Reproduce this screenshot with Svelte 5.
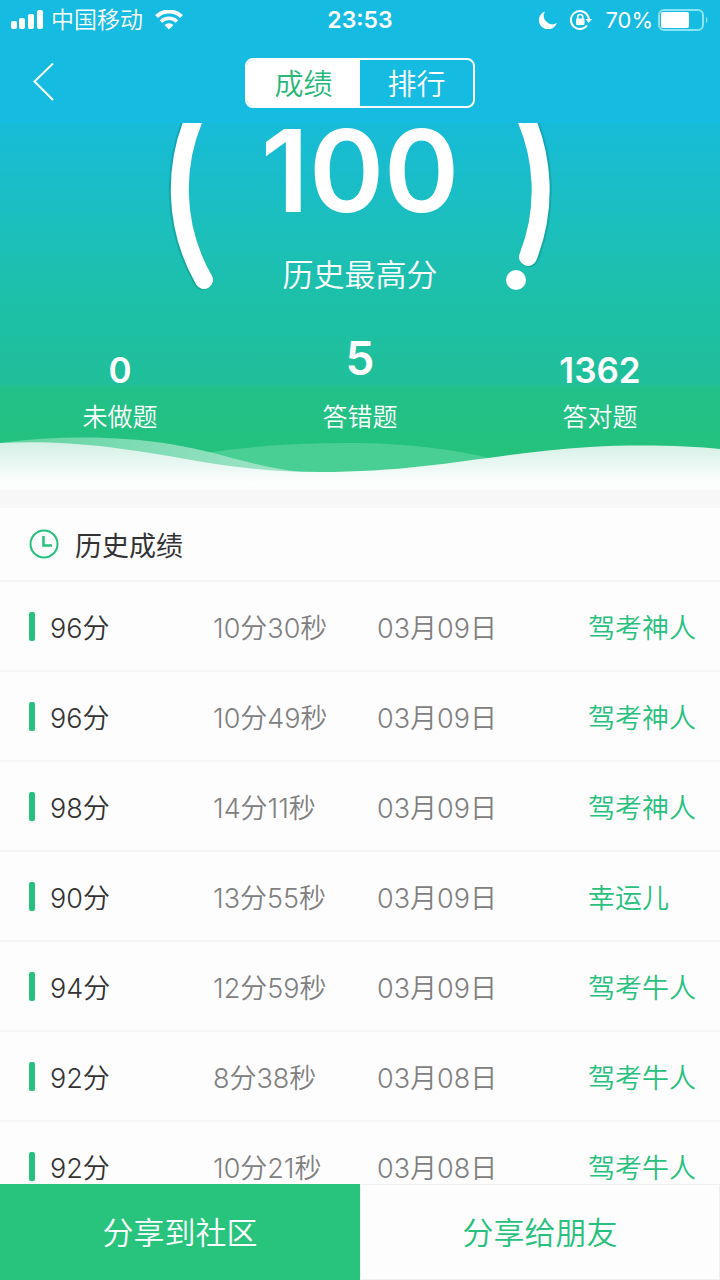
<script>
  // Currently selected tab
  let tab = $state('score');

  // Totals shown under the gauge
  const stats = [
    { value: 0, label: '未做题' },
    { value: 5, label: '答错题', big: true },
    { value: 1362, label: '答对题' },
  ];

  const records = [
    { score: 96, time: '10分30秒', date: '03月09日', title: '驾考神人' },
    { score: 96, time: '10分49秒', date: '03月09日', title: '驾考神人' },
    { score: 98, time: '14分11秒', date: '03月09日', title: '驾考神人' },
    { score: 90, time: '13分55秒', date: '03月09日', title: '幸运儿' },
    { score: 94, time: '12分59秒', date: '03月09日', title: '驾考牛人' },
    { score: 92, time: '8分38秒', date: '03月08日', title: '驾考牛人' },
    { score: 92, time: '10分21秒', date: '03月08日', title: '驾考牛人' },
  ];
</script>

<div class="screen">
  <!-- Status bar -->
  <div class="status">
    <div class="status-left">
      <svg width="32" height="20" viewBox="0 0 32 20" fill="#fff">
        <rect x="0" y="11" width="6" height="8" rx="2" />
        <rect x="8" y="8" width="6" height="11" rx="2" />
        <rect x="17" y="4" width="6" height="15" rx="2" />
        <rect x="26" y="0" width="6" height="19" rx="2" />
      </svg>
      <span class="carrier">中国移动</span>
      <svg class="wifi" width="28" height="20" viewBox="0 0 28 20">
        <path d="M1.5 6.500A18 18 0 0 1 26.500 6.500" fill="none" stroke="#fff" stroke-width="4" />
        <path d="M6 11.500A11.500 11.500 0 0 1 22 11.500" fill="none" stroke="#fff" stroke-width="3.600" />
        <path d="M9.500 15A6.500 6.500 0 0 1 18.500 15L14 19.500Z" fill="#fff" />
      </svg>
    </div>
    <span class="clock">23:53</span>
    <div class="status-right">
      <svg width="18" height="18" viewBox="0 0 18 18">
        <path d="M6 0.500A9.200 9.200 0 1 0 17.800 12A8.500 8.500 0 0 1 6 0.500Z" fill="#fff" />
      </svg>
      <svg class="lock" width="22" height="20" viewBox="0 0 22 20">
        <path d="M17 4.500A9 9 0 1 0 17 15.500M16 3.500A9 9 0 0 1 19 10" fill="none" stroke="#fff" stroke-width="2" />
        <path d="M15.500 9H22L18.700 13Z" fill="#fff" />
        <rect x="6" y="8.500" width="8.500" height="6.500" rx="1" fill="#fff" />
        <path d="M7.700 9V7a2.500 2.500 0 0 1 5 0V9" fill="none" stroke="#fff" stroke-width="1.600" />
      </svg>
      <span class="percent">70%</span>
      <svg width="51" height="22" viewBox="0 0 51 22">
        <rect x="1" y="1" width="44" height="20" rx="5" fill="none" stroke="#8be3f5" stroke-width="2" />
        <rect x="3" y="3" width="28" height="16" rx="2" fill="#fff" />
        <path d="M48 7.500Q51 11 48 14.500Z" fill="#8be3f5" />
      </svg>
    </div>
  </div>

  <!-- Navigation bar -->
  <header class="nav">
    <button class="back" aria-label="返回">
      <svg width="22" height="40" viewBox="0 0 22 40">
        <path d="M21 0.500L2.500 18.500L21 37" fill="none" stroke="#fff" stroke-width="2" />
      </svg>
    </button>
    <div class="tabs">
      <button class:active={tab === 'score'} onclick={() => (tab = 'score')}>成绩</button>
      <button class:active={tab === 'rank'} onclick={() => (tab = 'rank')}>排行</button>
    </div>
  </header>

  <!-- Best score and totals -->
  <section class="hero">
    <div class="gauge">
      <svg width="400" height="177" viewBox="160 123 400 177" fill="none" stroke-linecap="round">
        <g stroke="#08756f" stroke-opacity="0.3" stroke-width="20">
          <path d="M203 280A182 182 0 0 1 198 108" />
          <path d="M522 108A182 182 0 0 1 529 257" />
        </g>
        <g stroke="#fff" stroke-width="18">
          <path d="M204 280A182 182 0 0 1 199 108" />
          <path d="M521 108A182 182 0 0 1 528 257" />
        </g>
        <circle cx="516" cy="280" r="10" fill="#fff" />
      </svg>
      <div class="best">
        <strong>100</strong>
        <span>历史最高分</span>
      </div>
    </div>

    <div class="stats">
      {#each stats as stat}
        <div class="stat">
          <strong class:big={stat.big}>{stat.value}</strong>
          <span>{stat.label}</span>
        </div>
      {/each}
    </div>

    <svg class="waves" viewBox="0 0 720 56" preserveAspectRatio="none">
      <defs>
        <linearGradient id="mist" x1="0" y1="0" x2="0" y2="1">
          <stop offset="0" stop-color="#d3f0e5" />
          <stop offset="0.85" stop-color="#fdfefe" />
          <stop offset="1" stop-color="#fdfdfd" />
        </linearGradient>
        <linearGradient id="crest" x1="0" y1="0" x2="1" y2="0">
          <stop offset="0" stop-color="#5fd3a1" />
          <stop offset="1" stop-color="#a3e5c9" />
        </linearGradient>
      </defs>
      <path d="M170 25C230 13 300 8 360 9C410 10 450 15 490 24L490 40L320 40Z" fill="#49cf93" />
      <path d="M0 9C60 1 120 2 170 10C220 18 250 32 300 38L180 40L0 20Z" fill="url(#crest)" />
      <path d="M0 9C70 6 120 14 180 24C230 33 270 38 320 38C430 38 500 18 590 13C640 10 690 12 720 15V56H0Z" fill="url(#mist)" />
    </svg>
  </section>

  <!-- Score history -->
  <main class="history">
    <h2>
      <svg width="30" height="30" viewBox="0 0 30 30" fill="none" stroke="#27c07d">
        <circle cx="15" cy="15" r="13.500" stroke-width="2" />
        <path d="M14.500 7V16.500H23" stroke-width="2.500" />
      </svg>
      历史成绩
    </h2>
    <table>
      <tbody>
        {#each records as record}
          <tr>
            <td class="score"><span>{record.score}分</span></td>
            <td class="time">{record.time}</td>
            <td class="date">{record.date}</td>
            <td class="title">{record.title}</td>
          </tr>
        {/each}
      </tbody>
    </table>
  </main>

  <footer>
    <button class="primary">分享到社区</button>
    <button>分享给朋友</button>
  </footer>
</div>

<style>
  :global(body) {
    background: #fdfdfd;
  }
  .screen {
    display: flex;
    flex-direction: column;
    height: 100vh;
    font-family: Inter, "Noto Sans CJK SC", sans-serif;
    font-weight: 350;
    background: #fdfdfd;
    color: #333;
  }
  button {
    padding: 0;
    border: none;
    background: none;
    font: inherit;
    color: inherit;
    cursor: pointer;
  }
  svg {
    display: block;
    flex-shrink: 0;
  }

  /* Status bar */
  .status {
    display: grid;
    grid-template-columns: 1fr auto 1fr;
    align-items: center;
    flex-shrink: 0;
    height: 40px;
    padding: 0 11px;
    background: #15bbe0;
    color: #fff;
  }
  .status-left,
  .status-right {
    display: flex;
    align-items: center;
    gap: 8px;
  }
  .status-right {
    gap: 5px;
    justify-content: flex-end;
  }
  .carrier {
    font-size: 23px;
    line-height: 40px;
  }
  .wifi {
    margin-left: 4px;
  }
  .clock {
    font-size: 23px;
    font-weight: 600;
  }
  .percent {
    font-size: 22px;
    font-weight: 400;
  }
  .lock {
    margin: 0 8px;
  }

  /* Navigation bar */
  .nav {
    display: grid;
    grid-template-columns: 1fr auto 1fr;
    align-items: center;
    flex-shrink: 0;
    height: 83px;
    box-sizing: border-box;
    padding: 2px 32px 0;
    background: #15bbe0;
    color: #fff;
  }
  .back {
    justify-self: start;
  }
  .tabs {
    display: flex;
    width: 230px;
    height: 50px;
    box-sizing: border-box;
    border: 2px solid #fff;
    border-radius: 8px;
    overflow: hidden;
  }
  .tabs button {
    flex: 1;
    padding-top: 4px;
    font-size: 29px;
    line-height: 42px;
  }
  .tabs .active {
    background: #fff;
    color: #27b87a;
  }

  /* Best score and totals */
  .hero {
    flex-shrink: 0;
    background: linear-gradient(#17bbd8, #1bbfbc 28%, #1dc0a8 48%, #20bf9a 71%, #22c08a 72%, #24c27c 90%);
    color: #fff;
  }
  .gauge {
    display: grid;
    justify-items: center;
  }
  .gauge > * {
    grid-area: 1 / 1;
  }
  .best {
    display: flex;
    flex-direction: column;
    align-items: center;
    gap: 36px;
  }
  .best strong {
    font-size: 114px;
    line-height: 96px;
    font-weight: 600;
  }
  .best span {
    font-size: 31px;
    line-height: 40px;
  }
  .stats {
    display: flex;
    padding-top: 26px;
  }
  .stat {
    display: flex;
    flex: 1;
    flex-direction: column;
    justify-content: flex-end;
    align-items: center;
    gap: 10px;
  }
  .stat strong {
    font-size: 35px;
    line-height: 40px;
    font-weight: 600;
  }
  .stat .big {
    font-size: 46px;
    line-height: 64px;
  }
  .stat span {
    font-size: 25px;
    line-height: 34px;
  }
  .waves {
    width: 100%;
    height: 56px;
  }

  /* Score history */
  .history {
    flex: 1;
    min-height: 0;
    overflow-y: auto;
    scrollbar-width: none;
    border-top: 18px solid #f7f7f7;
  }
  h2 {
    display: flex;
    align-items: center;
    gap: 16px;
    height: 72px;
    margin: 0;
    padding: 0 29px;
    font-size: 27px;
    font-weight: 400;
  }
  table {
    width: 100%;
    table-layout: fixed;
    border-spacing: 0;
  }
  td {
    height: 90px;
    box-sizing: border-box;
    padding: 0;
    border-top: 2px solid #f5f5f5;
    font-size: 27px;
    white-space: nowrap;
  }
  .score {
    width: 213px;
    box-sizing: border-box;
    padding-left: 29px;
  }
  .score span {
    display: flex;
    align-items: center;
    gap: 15px;
  }
  .score span::before {
    content: "";
    width: 6px;
    height: 29px;
    border-radius: 2px;
    background: #27c07d;
  }
  .time {
    width: 164px;
    color: #808080;
  }
  .date {
    width: 211px;
    color: #808080;
  }
  .title {
    color: #27c07d;
  }

  /* Share buttons */
  footer {
    display: flex;
    flex-shrink: 0;
    height: 96px;
  }
  footer button {
    flex: 1;
    padding-bottom: 4px;
    border: 1px solid #f0f0f0;
    background: #fdfdfd;
    color: #27c07d;
    font-size: 31px;
  }
  footer .primary {
    border-color: #28c47e;
    background: #28c47e;
    color: #fff;
  }
</style>
